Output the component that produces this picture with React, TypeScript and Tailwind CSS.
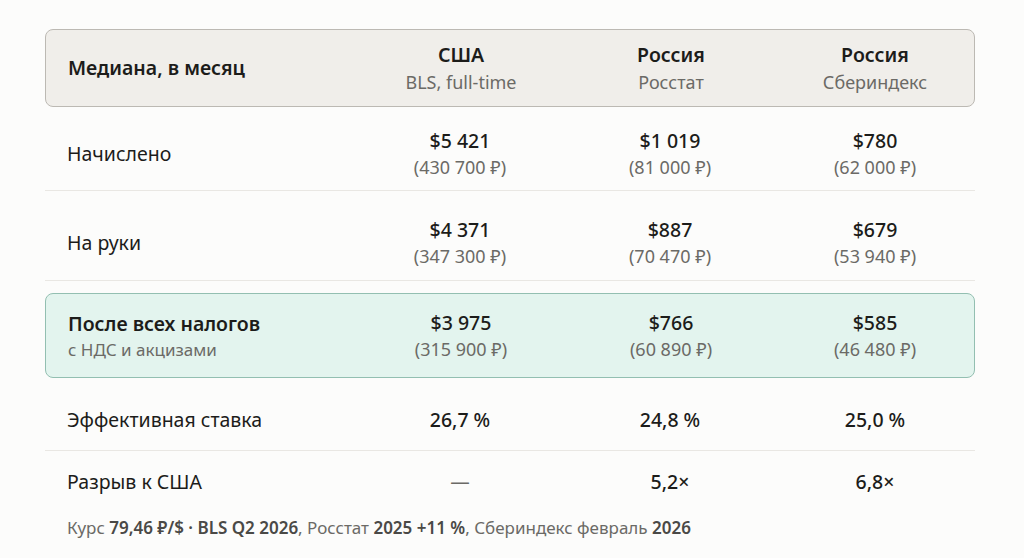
import React from "react";

type Cell = { usd: string; rub?: string };

type Row = {
  label: string;
  note?: string;
  cells: Cell[];
};

const FONT = { fontFamily: '"Noto Sans", "Open Sans", sans-serif' };

const money: Row[] = [
  {
    label: "Начислено",
    cells: [
      { usd: "$5 421", rub: "(430 700 ₽)" },
      { usd: "$1 019", rub: "(81 000 ₽)" },
      { usd: "$780", rub: "(62 000 ₽)" },
    ],
  },
  {
    label: "На руки",
    cells: [
      { usd: "$4 371", rub: "(347 300 ₽)" },
      { usd: "$887", rub: "(70 470 ₽)" },
      { usd: "$679", rub: "(53 940 ₽)" },
    ],
  },
];

const taxed: Row = {
  label: "После всех налогов",
  note: "с НДС и акцизами",
  cells: [
    { usd: "$3 975", rub: "(315 900 ₽)" },
    { usd: "$766", rub: "(60 890 ₽)" },
    { usd: "$585", rub: "(46 480 ₽)" },
  ],
};

const grid = "grid grid-cols-[288px_210px_210px_1fr] items-center pl-[22px]";

const Value = ({ cell }: { cell: Cell }) => (
  <div className="flex flex-col items-center">
    <span className="text-[19.5px] leading-[26px] font-medium text-[#1c1c1a]">{cell.usd}</span>
    {cell.rub && (
      <span className="text-[18px] leading-[26px] text-[#6b6a66]">{cell.rub}</span>
    )}
  </div>
);

const App = () => {
  return (
    <div className="min-h-screen w-full bg-[#fcfcfb] pt-[29px]" style={FONT}>
      <div className="ml-[45px] w-[930px]">
        {/* header */}
        <div className={`${grid} h-[78px] rounded-[8px] border border-[#bcb9b3] bg-[#f0eeea]`}>
          <div className="text-[19.5px] font-semibold text-[#1c1c1a]">Медиана, в месяц</div>
          {[
            ["США", "BLS, full-time"],
            ["Россия", "Росстат"],
            ["Россия", "Сбериндекс"],
          ].map(([t, s], i) => (
            <div key={i} className="flex flex-col items-center">
              <span className="text-[19.5px] leading-[28px] font-semibold text-[#1c1c1a]">{t}</span>
              <span className="text-[18px] leading-[26px] text-[#6b6a66]">{s}</span>
            </div>
          ))}
        </div>

        {/* money rows */}
        <div className={`${grid} h-[84px] pt-[11px] border-b border-[#e9e7e3]`}>
          <div className="text-[19.5px] text-[#1c1c1a]">{money[0].label}</div>
          {money[0].cells.map((c, i) => (
            <Value key={i} cell={c} />
          ))}
        </div>
        <div className={`${grid} h-[90px] pt-[15px] border-b border-[#e9e7e3]`}>
          <div className="text-[19.5px] text-[#1c1c1a]">{money[1].label}</div>
          {money[1].cells.map((c, i) => (
            <Value key={i} cell={c} />
          ))}
        </div>

        {/* highlighted row */}
        <div className={`${grid} mt-[12px] h-[85px] rounded-[8px] border border-[#93bfb1] bg-[#e3f4ee]`}>
          <div className="flex flex-col">
            <span className="text-[19.5px] leading-[28px] font-semibold text-[#1c1c1a]">{taxed.label}</span>
            <span className="text-[17px] leading-[24px] text-[#6b6a66]">{taxed.note}</span>
          </div>
          {taxed.cells.map((c, i) => (
            <Value key={i} cell={c} />
          ))}
        </div>

        {/* rate row */}
        <div className={`${grid} h-[73px] pt-[11px] border-b border-[#e9e7e3]`}>
          <div className="text-[19.5px] text-[#1c1c1a]">Эффективная ставка</div>
          {["26,7 %", "24,8 %", "25,0 %"].map((v, i) => (
            <div key={i} className="text-center text-[19.5px] font-medium text-[#1c1c1a]">
              {v}
            </div>
          ))}
        </div>

        {/* gap row */}
        <div className={`${grid} h-[56px] pt-[5px]`}>
          <div className="text-[19.5px] text-[#1c1c1a]">Разрыв к США</div>
          {["—", "5,2×", "6,8×"].map((v, i) => (
            <div
              key={i}
              className={`text-center text-[19.5px] ${i === 0 ? "text-[#6b6a66]" : "font-medium text-[#1c1c1a]"}`}
            >
              {v}
            </div>
          ))}
        </div>

        {/* footnote */}
        <p className="mt-[9px] pl-[22px] text-[17px] leading-[24px] text-[#6b6a66]">
          Курс <b className="font-semibold text-[#4a4946]">79,46 ₽/$ · BLS Q2 2026</b>, Росстат{" "}
          <b className="font-semibold text-[#4a4946]">2025 +11 %</b>, Сбериндекс февраль{" "}
          <b className="font-semibold text-[#4a4946]">2026</b>
        </p>
      </div>
    </div>
  );
};

export default App;
